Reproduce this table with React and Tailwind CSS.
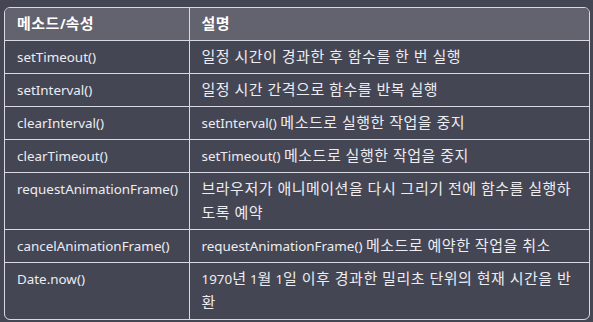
import React from 'react';

const rows = [
  ['setTimeout()', '일정 시간이 경과한 후 함수를 한 번 실행'],
  ['setInterval()', '일정 시간 간격으로 함수를 반복 실행'],
  ['clearInterval()', 'setInterval() 메소드로 실행한 작업을 중지'],
  ['clearTimeout()', 'setTimeout() 메소드로 실행한 작업을 중지'],
  ['requestAnimationFrame()', '브라우저가 애니메이션을 다시 그리기 전에 함수를 실행하도록 예약'],
  ['cancelAnimationFrame()', 'requestAnimationFrame() 메소드로 예약한 작업을 취소'],
  ['Date.now()', '1970년 1월 1일 이후 경과한 밀리초 단위의 현재 시간을 반환'],
];

// Hangul runs get a slightly larger size so they take the width of the original font
const Ko = ({ text }) =>
  text.split(/([가-힣]+(?:\s+[가-힣]+)*)/).map((part, i) =>
    /[가-힣]/.test(part) ? (
      <span key={i} className="text-[15px] leading-none tracking-[0.5px]">{part}</span>
    ) : (
      <React.Fragment key={i}>{part}</React.Fragment>
    )
  );

const App = () => {
  return (
    <div
      className="w-[593px] h-[322px] bg-[#444654] text-[#ececf1] pt-[7px] px-1 overflow-hidden"
      style={{ fontFamily: '"Noto Sans", "Noto Sans CJK KR", sans-serif' }}
    >
      <div className="w-[586px] border border-[#d9d9e3] rounded-md overflow-hidden">
        <table className="w-full border-collapse table-fixed text-[13.4px] leading-6">
          <colgroup>
            <col className="w-[184px]" />
            <col />
          </colgroup>
          <thead>
            <tr className="bg-[#62636f]">
              <th className="h-8 text-left font-bold text-white px-3 py-1 border-r border-[#d9d9e3]"><Ko text="메소드/속성" /></th>
              <th className="h-8 text-left font-bold text-white px-3 py-1"><Ko text="설명" /></th>
            </tr>
          </thead>
          <tbody>
            {rows.map(([name, desc]) => (
              <tr key={name} className="border-t border-[#d9d9e3] align-top">
                <td className="h-8 px-3 py-1 border-r border-[#d9d9e3]">{name}</td>
                <td className="h-8 px-3 py-1"><Ko text={desc} /></td>
              </tr>
            ))}
          </tbody>
        </table>
      </div>
    </div>
  );
};

export default App;
